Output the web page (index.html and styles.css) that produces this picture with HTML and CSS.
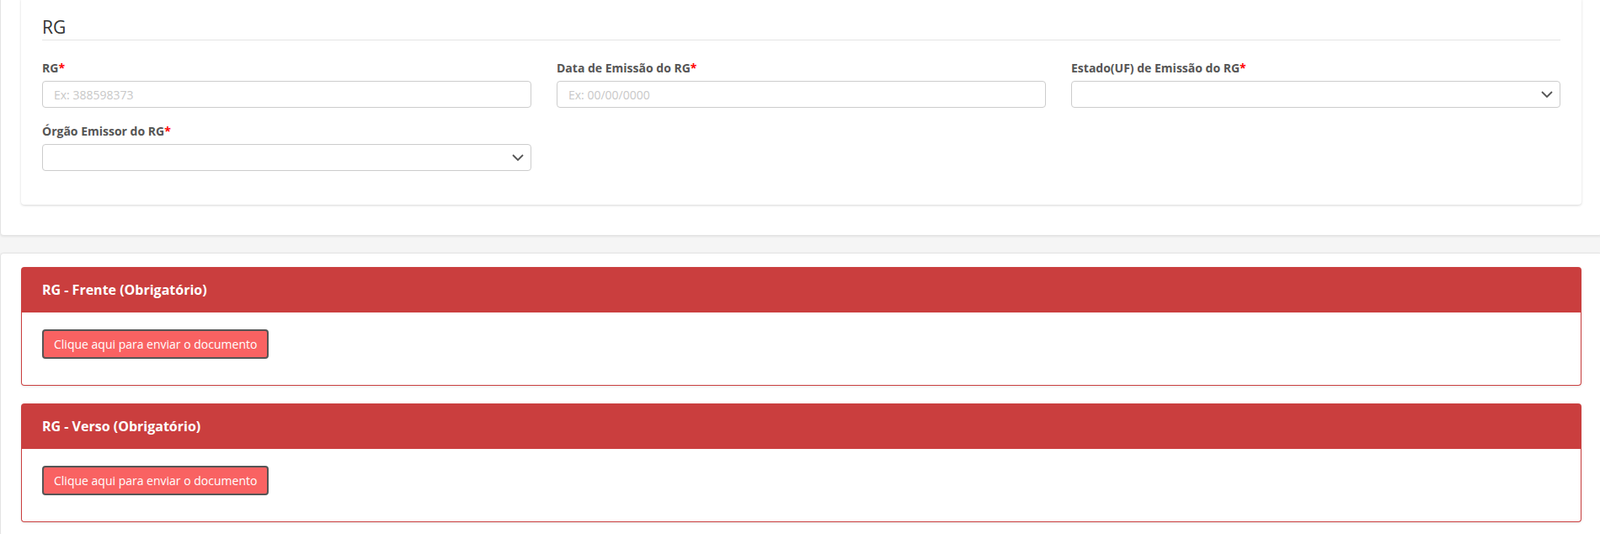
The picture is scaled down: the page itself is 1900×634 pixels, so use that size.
FILE: index.html
```html
<!DOCTYPE html>
<html lang="pt-BR">
<head>
  <meta charset="UTF-8" />
  <meta name="viewport" content="width=device-width, initial-scale=1.0" />
  <title>Documentos - RG</title>
  <link rel="stylesheet" href="styles.css">
</head>
<body>
  <div class="page">
    <div class="panel panel-top">
      <div class="box">
        <fieldset>
          <legend>RG</legend>
          <div class="form-row">
            <div class="form-group">
              <label for="rg">RG<span class="req">*</span></label>
              <input type="text" id="rg" placeholder="Ex: 388598373" />
            </div>
            <div class="form-group">
              <label for="rgData">Data de Emissão do RG<span class="req">*</span></label>
              <input type="text" id="rgData" placeholder="Ex: 00/00/0000" />
            </div>
            <div class="form-group">
              <label for="rgUf">Estado(UF) de Emissão do RG<span class="req">*</span></label>
              <div class="select-wrap">
                <select id="rgUf"><option></option></select>
                <svg class="chevron" width="14" height="8" viewBox="0 0 14 8"><path d="M1 1l6 6 6-6" fill="none" stroke="#555" stroke-width="1.8"/></svg>
              </div>
            </div>
            <div class="form-group">
              <label for="rgOrgao">Órgão Emissor do RG<span class="req">*</span></label>
              <div class="select-wrap">
                <select id="rgOrgao"><option></option></select>
                <svg class="chevron" width="14" height="8" viewBox="0 0 14 8"><path d="M1 1l6 6 6-6" fill="none" stroke="#555" stroke-width="1.8"/></svg>
              </div>
            </div>
          </div>
        </fieldset>
      </div>
    </div>

    <div class="panel panel-docs">
      <div class="doc-card">
        <div class="doc-header">RG - Frente (Obrigatório)</div>
        <div class="doc-body">
          <button type="button" class="btn-upload">Clique aqui para enviar o documento</button>
        </div>
      </div>
      <div class="doc-card">
        <div class="doc-header">RG - Verso (Obrigatório)</div>
        <div class="doc-body">
          <button type="button" class="btn-upload">Clique aqui para enviar o documento</button>
        </div>
      </div>
    </div>
  </div>
</body>
</html>
```

FILE: styles.css
```css
html, body {
  margin: 0;
  overflow: hidden;
}
body {
  background: #f5f5f5;
  font-family: 'Open Sans', 'Liberation Sans', sans-serif;
  font-size: 14px;
  line-height: 20px;
  color: #555;
}
.page {
  margin-top: -20px;
}
.panel {
  background: #fff;
  border: 1px solid #e3e3e3;
  border-radius: 4px;
  margin-right: -3px;
  padding: 16px 24px;
  box-shadow: 0 1px 3px rgba(0,0,0,0.08);
}
.panel-top {
  padding-bottom: 36px;
  margin-bottom: 20px;
}
.box {
  background: #fff;
  border-radius: 4px;
  box-shadow: 0 1px 3px rgba(0,0,0,0.16);
  padding: 20px 25px 40px;
}
fieldset {
  border: none;
  margin: 0;
  padding: 0;
  min-width: 0;
}
legend {
  display: block;
  width: 100%;
  padding: 0;
  margin: 0 0 23px;
  font-size: 21px;
  line-height: 30px;
  color: #333;
  border-bottom: 1px solid #e5e5e5;
}
.form-row {
  display: grid;
  grid-template-columns: repeat(3, 1fr);
  column-gap: 30px;
  row-gap: 18px;
}
label {
  display: block;
  font-weight: 700;
  margin-bottom: 5px;
  color: #555;
}
.req {
  color: #f00;
}
input, select {
  display: block;
  width: 100%;
  height: 32px;
  box-sizing: border-box;
  border: 1px solid #ccc;
  border-radius: 4px;
  padding: 0 13px;
  font-family: inherit;
  font-size: 14px;
  color: #555;
  background: #fff;
}
input::placeholder {
  color: #c8c8c8;
}
select {
  appearance: none;
  -webkit-appearance: none;
}
.select-wrap {
  position: relative;
}
.chevron {
  position: absolute;
  right: 9px;
  top: 12px;
}
.doc-card {
  border-radius: 4px;
  box-shadow: 0 1px 3px rgba(0,0,0,0.1);
}
.doc-card + .doc-card {
  margin-top: 21px;
}
.doc-header {
  background: #ca3e3e;
  color: #fff;
  font-size: 16px;
  font-weight: 700;
  line-height: 24px;
  padding: 15px 25px;
  border-radius: 4px 4px 0 0;
}
.doc-body {
  border: 1px solid #ca3e3e;
  border-top: none;
  border-radius: 0 0 4px 4px;
  padding: 20px 24px 31px;
}
.btn-upload {
  display: inline-block;
  font-family: inherit;
  font-size: 14px;
  line-height: 19px;
  padding: 6px 12px;
  color: #fff;
  background: #f96262;
  border: 2px solid #555;
  border-radius: 4px;
  cursor: pointer;
}
```
